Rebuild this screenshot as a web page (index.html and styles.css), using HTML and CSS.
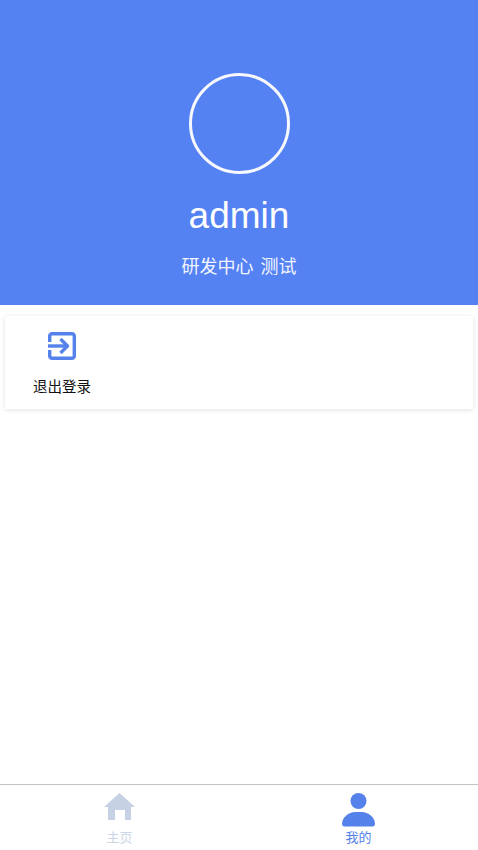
FILE: index.html
```html
<!DOCTYPE html>
<html lang="zh-CN">
<head>
  <meta charset="UTF-8">
  <title>我的</title>
  <meta name="viewport" content="width=device-width, initial-scale=1.0">
  <link rel="stylesheet" href="styles.css">
</head>
<body>

  <header class="profile">
    <div class="avatar"></div>
    <div class="username">admin</div>
    <div class="dept">研发中心 测试</div>
  </header>

  <main class="content">
    <div class="action-card">
      <div class="action">
        <svg class="action-icon" viewBox="0 0 30 30" fill="none" stroke="#5582ea" stroke-width="3.400" stroke-linejoin="round">
          <path d="M2.700 11V5A2.300 2.300 0 0 1 5 2.700h20A2.300 2.300 0 0 1 27.300 5v20a2.300 2.300 0 0 1-2.300 2.300H5A2.300 2.300 0 0 1 2.700 25v-6"/>
          <path d="M1 15h18.500"/>
          <path d="M13.500 8l7 7-7 7"/>
        </svg>
        <span class="action-label">退出登录</span>
      </div>
    </div>
  </main>

  <nav class="tabbar">
    <div class="tab">
      <svg class="tab-icon" viewBox="0 0 33 34" fill="#c6d2e4">
        <path d="M16.500 0L32 14H28V27H22V17H12V27H5V14H1z"/>
      </svg>
      <span class="tab-label">主页</span>
    </div>
    <div class="tab active">
      <svg class="tab-icon" viewBox="0 0 33 34" fill="#5582ea">
        <circle cx="16.500" cy="8" r="8"/>
        <path d="M0 31C0 24 7 19 13 19h7c6 0 13 5 13 12 0 1.500-1 2.500-2.500 2.500h-28C1 33.500 0 32.500 0 31z"/>
      </svg>
      <span class="tab-label">我的</span>
    </div>
  </nav>

</body>
</html>
```

FILE: styles.css
```css
* {
  box-sizing: border-box;
}

body {
  margin: 0;
  height: 850px;
  display: flex;
  flex-direction: column;
  font-family: "Liberation Sans", "Noto Sans CJK SC", sans-serif;
  background-color: #fff;
  overflow: hidden;
}

.profile {
  height: 305px;
  padding-top: 73px;
  display: flex;
  flex-direction: column;
  align-items: center;
  background-color: #5582f3;
  color: #fff;
}

.avatar {
  width: 101px;
  height: 101px;
  border: 3px solid #f6f8fe;
  border-radius: 50%;
}

.username {
  margin-top: 19px;
  font-size: 37px;
  line-height: 46px;
}

.dept {
  margin-top: 15px;
  font-size: 18px;
  line-height: 26px;
  word-spacing: 2px;
  color: #f2f5fe;
}

.content {
  flex: 1;
  padding: 11px 5px 0;
}

.action-card {
  height: 93px;
  padding: 15px 28px 0;
  background-color: #fff;
  box-shadow: 0 1px 5px rgba(0, 0, 0, 0.12);
}

.action {
  width: 58px;
  display: flex;
  flex-direction: column;
  align-items: center;
}

.action-icon {
  width: 30px;
  height: 30px;
}

.action-label {
  margin-top: 16px;
  font-size: 14.500px;
  line-height: 20px;
  white-space: nowrap;
  color: #111;
}

.tabbar {
  height: 66px;
  display: flex;
  border-top: 1px solid #c4c4c6;
  background-color: #fff;
}

.tab {
  flex: 1;
  padding-top: 8px;
  display: flex;
  flex-direction: column;
  align-items: center;
  color: #ccd6e6;
}

.tab-icon {
  width: 33px;
  height: 34px;
}

.tab.active {
  color: #5582ea;
}

.tab-label {
  margin-top: 2px;
  font-size: 13px;
  line-height: 18px;
}
```
